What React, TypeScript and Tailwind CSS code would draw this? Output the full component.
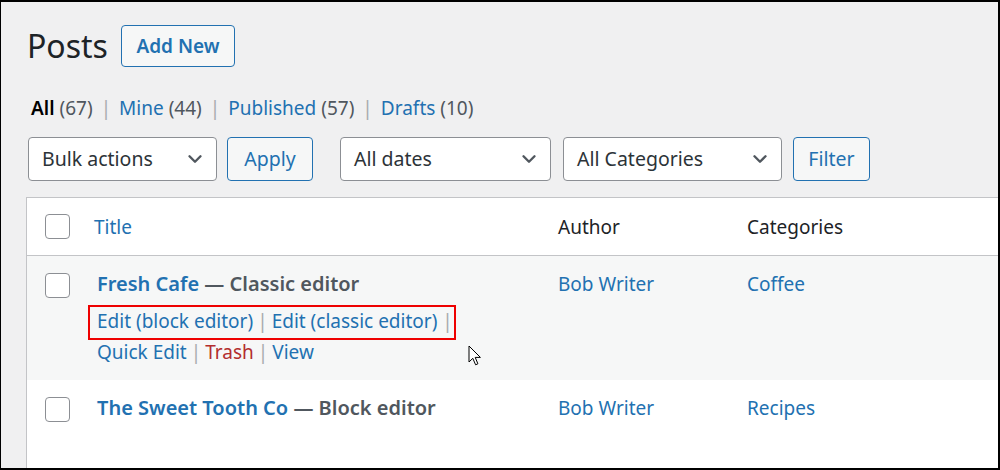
import { ChevronDown } from "lucide-react";

const link = "text-[#2271b1]";

function Checkbox() {
  return <span className="block size-[25px] rounded-[4px] border-[1.5px] border-[#8c8f94] bg-white" />;
}

function Select({ label, width }: { label: string; width: string }) {
  return (
    <div className={`flex h-[44px] items-center justify-between rounded-[4px] border border-[#8c8f94] bg-white pl-[13px] pr-[10px] text-[19.5px] text-[#2c3338] ${width}`}>
      <span>{label}</span>
      <ChevronDown className="size-[22px] text-[#50575e]" strokeWidth={2.6} />
    </div>
  );
}

function Button({ label, width }: { label: string; width: string }) {
  return (
    <button className={`h-[44px] rounded-[4px] border border-[#2271b1] bg-[#f6f7f7] text-[19.5px] text-[#2271b1] ${width}`}>
      {label}
    </button>
  );
}

function Sep({ className = "mx-[4px]" }: { className?: string }) {
  return <span className={`text-[#a7aaad] ${className}`}>|</span>;
}

function Cursor() {
  return (
    <svg className="absolute left-[467px] top-[343px]" width="14" height="22" viewBox="0 0 14 22">
      <path d="M1 1 L1 17 L4.8 13.3 L7.6 19.8 L9.9 18.8 L7.2 12.4 L12.4 12.4 Z" fill="white" stroke="black" strokeWidth="1" strokeLinejoin="round" />
    </svg>
  );
}

export default function App() {
  return (
    <div className="relative h-[470px] w-[1000px] overflow-hidden border-b-2 border-l border-r-2 border-t-2 border-black bg-[#f0f0f1] font-['Noto_Sans',sans-serif]">
      <div className="pl-[26px] pt-[23px]">
        {/* heading */}
        <div className="flex h-[42px] items-center gap-[13px]">
          <h1 className="text-[32px] leading-[42px] text-[#1d2327]">Posts</h1>
          <button className="h-[42px] w-[114px] rounded-[4px] border border-[#2271b1] bg-[#f6f7f7] text-[19px] font-semibold text-[#2271b1]">
            Add New
          </button>
        </div>

        {/* views */}
        <div className="mt-[27px] pl-[4px] text-[19px] leading-[28px] text-[#646970]">
          <span className="font-semibold text-black">All</span> <span className="text-[#50575e]">(67)</span>
          <Sep className="mx-[8px] text-[#646970]" />
          <span className={link}>Mine</span> <span className="text-[#50575e]">(44)</span>
          <Sep className="mx-[8px] text-[#646970]" />
          <span className={link}>Published</span> <span className="text-[#50575e]">(57)</span>
          <Sep className="mx-[8px] text-[#646970]" />
          <span className={link}>Drafts</span> <span className="text-[#50575e]">(10)</span>
        </div>

        {/* toolbar */}
        <div className="mt-[15px] flex items-center pl-[1px]">
          <Select label="Bulk actions" width="w-[189px]" />
          <div className="ml-[10px]">
            <Button label="Apply" width="w-[86px]" />
          </div>
          <div className="ml-[27px]">
            <Select label="All dates" width="w-[211px]" />
          </div>
          <div className="ml-[12px]">
            <Select label="All Categories" width="w-[219px]" />
          </div>
          <div className="ml-[11px]">
            <Button label="Filter" width="w-[77px]" />
          </div>
        </div>

        {/* table */}
        <div className="-ml-[1px] mt-[16px] w-[1000px] border-l border-t border-[#c3c4c7] bg-white text-[19px] leading-[28px]">
          <div className="grid h-[58px] grid-cols-[67px_464px_189px_1fr] border-b border-[#c3c4c7]">
            <div className="pl-[18px] pt-[16px]">
              <Checkbox />
            </div>
            <div className={`pt-[15px] ${link}`}>Title</div>
            <div className="pt-[15px] text-[#1d2327]">Author</div>
            <div className="pt-[15px] text-[#1d2327]">Categories</div>
          </div>

          <div className="grid h-[124px] grid-cols-[67px_464px_189px_1fr] bg-[#f6f7f7]">
            <div className="pl-[18px] pt-[17px]">
              <Checkbox />
            </div>
            <div className="pl-[3px] pt-[14px]">
              <div className="text-[20px] font-semibold">
                <span className={link}>Fresh Cafe</span>
                <span className="text-[#50575e]"> — Classic editor</span>
              </div>
              <div className="mt-[8px] leading-[31px]">
                <div className="relative">
                  <span className={link}>Edit (block editor)</span>
                  <Sep />
                  <span className={link}>Edit (classic editor)</span>
                  <Sep className="ml-[5px]" />
                  <span className="absolute -left-[9px] top-[-1px] h-[35px] w-[368px] border-2 border-[#ee0000]" />
                </div>
                <div>
                  <span className={link}>Quick Edit</span>
                  <Sep />
                  <span className="text-[#b32d2e]">Trash</span>
                  <Sep />
                  <span className={link}>View</span>
                </div>
              </div>
            </div>
            <div className={`pt-[14px] ${link}`}>Bob Writer</div>
            <div className={`pt-[14px] ${link}`}>Coffee</div>
          </div>

          <div className="grid h-[100px] grid-cols-[67px_464px_189px_1fr]">
            <div className="pl-[18px] pt-[17px]">
              <Checkbox />
            </div>
            <div className="pl-[3px] pt-[14px] text-[20px] font-semibold">
              <span className={link}>The Sweet Tooth Co</span>
              <span className="text-[#50575e]"> — Block editor</span>
            </div>
            <div className={`pt-[14px] ${link}`}>Bob Writer</div>
            <div className={`pt-[14px] ${link}`}>Recipes</div>
          </div>
        </div>
      </div>
      <Cursor />
    </div>
  );
}
